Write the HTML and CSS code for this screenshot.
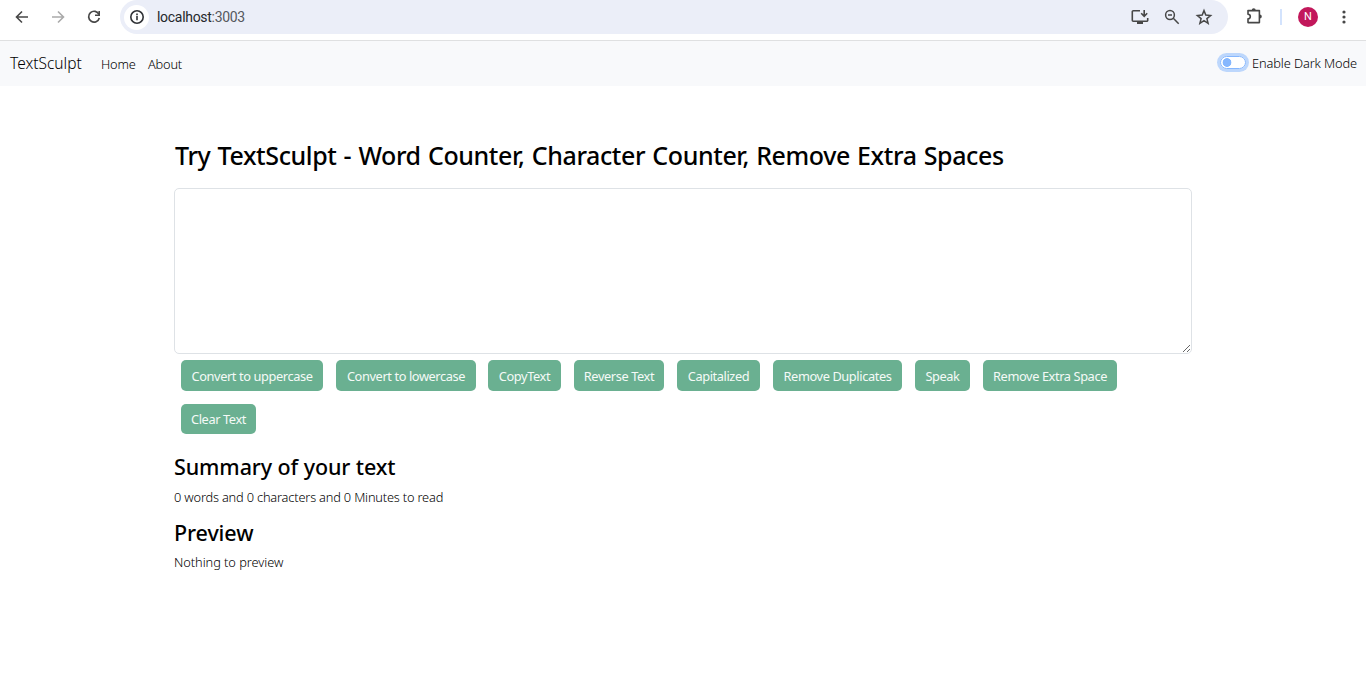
FILE: index.html
```html
<!DOCTYPE html>
<html lang="en">
<head>
<meta charset="utf-8">
<title>TextSculpt</title>
<link rel="stylesheet" href="styles.css">
</head>
<body>
<header class="toolbar">
  <div class="nav-icons">
    <svg width="16" height="16" viewBox="0 0 16 16"><path d="M14 8H3M8 2.5 2.5 8 8 13.5" fill="none" stroke="#474747" stroke-width="1.6"/></svg>
    <svg width="16" height="16" viewBox="0 0 16 16"><path d="M2 8h11M8 2.5 13.5 8 8 13.5" fill="none" stroke="#aaa" stroke-width="1.6"/></svg>
    <svg width="16" height="16" viewBox="0 0 16 16"><path d="M13 5.5A5.4 5.4 0 1 0 13.3 9" fill="none" stroke="#474747" stroke-width="1.7"/><path d="M14 2v5H9V5.4h3.4V2z" fill="#474747"/></svg>
  </div>
  <div class="address">
    <span class="info"><svg width="16" height="16" viewBox="0 0 16 16"><circle cx="8" cy="8" r="6.2" fill="none" stroke="#303236" stroke-width="1.6"/><path d="M7.2 7.1h1.6v4.2H7.2zM7.2 4.6h1.6v1.6H7.2z" fill="#303236"/></svg></span>
    <span class="url">localhost<span class="port">:3003</span></span>
    <span class="address-icons">
      <svg width="18" height="18" viewBox="0 0 18 18"><path d="M9 2.8H2.3a1 1 0 0 0-1 1v8.4a1 1 0 0 0 1 1h13.4a1 1 0 0 0 1-1V10" fill="none" stroke="#474747" stroke-width="1.6"/><path d="M6 13h6v3H6z" fill="#474747"/><path d="M13.2 2v6M10.2 5.3l3 3 3-3" fill="none" stroke="#474747" stroke-width="1.6"/></svg>
      <svg width="16" height="16" viewBox="0 0 16 16"><circle cx="6" cy="6" r="4.4" fill="none" stroke="#474747" stroke-width="1.5"/><path d="M9.3 9.3 14.7 14.7M4 6h4" fill="none" stroke="#474747" stroke-width="1.5"/></svg>
      <svg width="18" height="18" viewBox="0 0 18 18"><path d="m9 2.6 1.8 4.5 4.8.4-3.7 3.1 1.2 4.7L9 12.7l-4.1 2.6 1.2-4.7-3.7-3.1 4.8-.4z" fill="none" stroke="#474747" stroke-width="1.5"/></svg>
    </span>
  </div>
  <svg class="puzzle" width="18" height="18" viewBox="0 0 18 18"><path d="M3 3.6h11.4v12H3v-3.7a2.3 2.3 0 0 0 0-4.6z" fill="none" stroke="#474747" stroke-width="1.6" stroke-linejoin="round"/><path d="M6.700 3.200a2 2 0 0 1 4 0zM14.800 7.600a2 2 0 0 1 0 4z" fill="#474747"/></svg>
  <span class="separator"></span>
  <span class="avatar">N</span>
  <svg class="menu" width="16" height="16" viewBox="0 0 16 16" fill="#474747"><circle cx="8" cy="3" r="1.6"/><circle cx="8" cy="8" r="1.6"/><circle cx="8" cy="13" r="1.6"/></svg>
</header>
<nav class="navbar">
  <span class="brand">TextSculpt</span>
  <span class="link home">Home</span>
  <span class="link">About</span>
  <span class="switch"></span>
  <span class="switch-label">Enable Dark Mode</span>
</nav>
<main class="container">
  <h1>Try TextSculpt - Word Counter, Character Counter, Remove Extra Spaces</h1>
  <textarea class="editor" aria-label="Text"></textarea>
  <div class="actions">
    <button class="btn w-upper">Convert to uppercase</button>
    <button class="btn w-lower">Convert to lowercase</button>
    <button class="btn w-copy">CopyText</button>
    <button class="btn w-reverse">Reverse Text</button>
    <button class="btn w-cap">Capitalized</button>
    <button class="btn w-dup">Remove Duplicates</button>
    <button class="btn w-speak">Speak</button>
    <button class="btn w-space">Remove Extra Space</button>
    <button class="btn w-clear">Clear Text</button>
  </div>
  <h2 class="summary-title">Summary of your text</h2>
  <p class="summary">0 words and 0 characters and 0 Minutes to read</p>
  <h2 class="preview-title">Preview</h2>
  <p class="preview">Nothing to preview</p>
</main>
</body>
</html>
```
FILE: styles.css
```css
* { box-sizing: border-box; }
body { margin: 0; background: #fff; color: #000; font: 300 12.8px/19px "Noto Sans", sans-serif; overflow: hidden; }
svg { display: block; flex: none; }
.toolbar { display: flex; height: 41px; padding: 0 14px; border-bottom: 1px solid #dfe0e1; align-items: flex-start; }
.nav-icons { display: flex; gap: 20px; padding-top: 9px; width: 106px; }
.address { display: flex; align-items: center; width: 1108px; height: 34px; padding-left: 4px; background: #ebeef8; border-radius: 17px; }
.info { width: 25px; height: 25px; border-radius: 50%; background: #fff; display: grid; place-items: center; }
.url { margin-left: 8px; font-family: Roboto, sans-serif; font-weight: 400; font-size: 14px; letter-spacing: -.3px; color: #25272b; }
.port { color: #55585d; }
.address-icons { margin-left: auto; margin-right: 15px; display: flex; gap: 15px; align-items: center; }
.puzzle { margin: 7px 0 0 17px; }
.separator { width: 2px; height: 16px; background: #d3e3fd; margin: 9px 0 0 17px; }
.avatar { width: 20px; height: 20px; border-radius: 50%; background: #c2185b; color: #fff; margin: 7px 0 0 16px; font: 11px/20px Roboto, sans-serif; text-align: center; }
.menu { margin: 9px 0 0 18px; }
.navbar { display: flex; align-items: center; height: 45px; padding: 0 9px 0 10px; background: #f8f9fb; }
.brand { font-size: 15.5px; letter-spacing: 0; width: 91px; }
.link { letter-spacing: -.2px; padding-top: 2px; }
.home { width: 47px; }
.switch { margin: 0 0 2px auto; width: 26px; height: 13px; border: 1px solid #86b7fe; border-radius: 7px; box-shadow: 0 0 0 3px #bdd7fc; background: radial-gradient(circle at 6px 5.5px, #86b7fe 4px, #fff 4.7px); }
.switch-label { margin-left: 6px; letter-spacing: -.1px; color: #000; width: 105px; white-space: nowrap; }
.container { width: 1018px; margin: 0 auto; padding-top: 53px; }
h1, h2, p { margin: 0; white-space: nowrap; }
h1 { font-size: 25px; line-height: 32px; font-weight: 500; letter-spacing: -.4px; word-spacing: 1.1px; text-indent: 1px; }
.editor { display: block; width: 100%; height: 166px; margin-top: 17px; border: 1px solid #dee2e6; border-radius: 5px; resize: vertical; outline: none; }
.actions { display: flex; flex-wrap: wrap; gap: 13px; padding: 6px 0 0 7px; }
.btn { height: 31px; padding: 2px 0 0; border: 0; border-radius: 5px; background: #6ab091; color: #f5faf7; font: 12.8px/19px "Noto Sans", sans-serif; letter-spacing: -.4px; white-space: nowrap; }
.w-upper { width: 142px; }
.w-lower { width: 140px; margin-right: -1px; }
.w-copy { width: 73px; }
.w-reverse { width: 90px; }
.w-cap { width: 83px; }
.w-dup { width: 129px; }
.w-speak { width: 55px; }
.w-space { width: 134px; }
.w-clear { width: 75px; height: 30px; padding-top: 1px; }
h2 { font-size: 21.5px; line-height: 27px; font-weight: 500; letter-spacing: -.1px; }
.summary-title { margin-top: 19px; }
.summary { margin-top: 8px; letter-spacing: -.18px; }
.preview-title { margin-top: 12px; }
.preview { margin-top: 7px; letter-spacing: -.05px; }
```
